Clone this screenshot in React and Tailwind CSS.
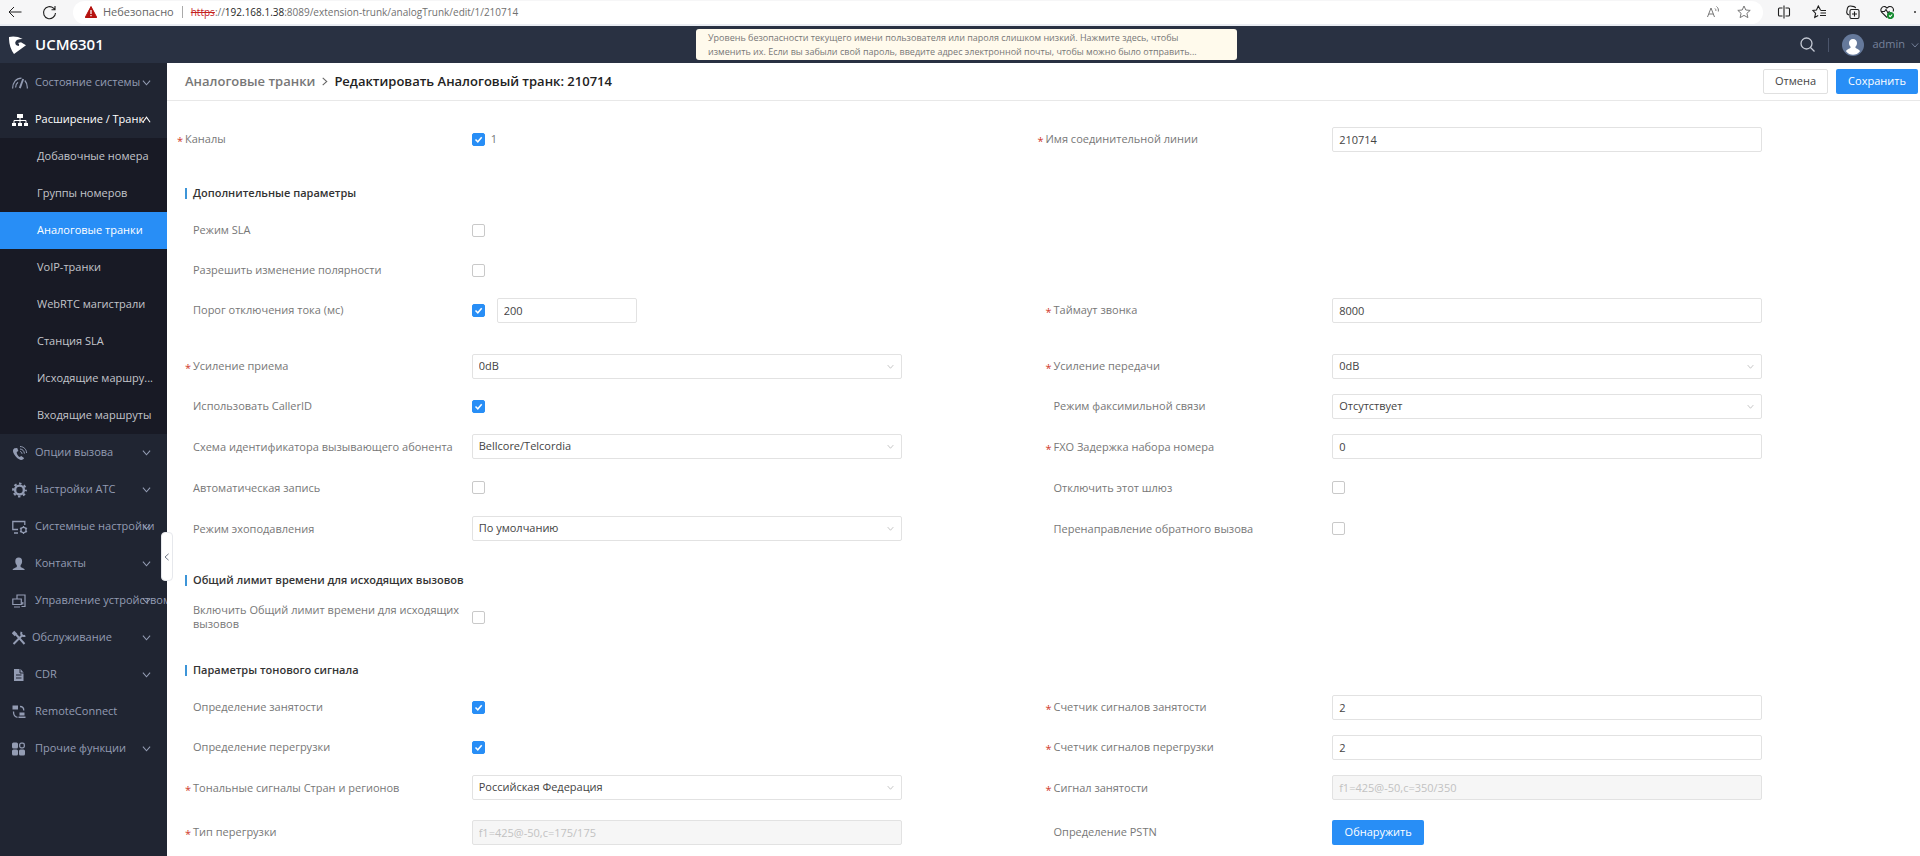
import { useState } from "react";

const ic = "w-4 h-4 shrink-0";

const DashIcon = () => (
  <svg className={ic} viewBox="0 0 16 16" fill="none" stroke="currentColor" strokeWidth="1.200">
    <path d="M.6 13.500C.6 7.500 4 3.200 9.500 3.200M3.600 12.500C3.600 10 4.600 8.200 6 7.200" />
    <path d="M7.800 13.200L11.200 4" strokeWidth="1.900" />
    <path d="M12.800 5.500C14.600 7.500 15.500 10.500 15.300 13.500" />
  </svg>
);
const TreeIcon = () => (
  <svg className={ic} viewBox="0 0 16 16" fill="currentColor">
    <path d="M5 2h6v4H5zM0 11h4v3H0zM6 11h4v3H6zM12 11h4v3h-4z" />
    <path d="M8 6v5M2 11V8.500h12V11" fill="none" stroke="currentColor" />
  </svg>
);
const PhoneIcon = () => (
  <svg className={ic} viewBox="0 0 16 16" fill="currentColor">
    <path d="M2.500 3.200C.5 4.200.5 6.600 2.300 9.600s4.400 5 6.500 5.400c1.600.2 3.300-.8 3.200-1.900l-2.700-2.200-1.700 1.200C6.200 11.500 4.500 8.700 4.700 7l1.700-1L5.200 3z" />
    <path d="M8 6.500c1.200.2 2 1 2 2.300M8 4c2.600.2 4.300 2 4.400 4.600M8 1.500c4 .2 6.500 3 6.600 6.500" fill="none" stroke="currentColor" />
  </svg>
);
const GearIcon = () => (
  <svg className={ic} viewBox="0 0 16 16" fill="none" stroke="currentColor">
    <circle cx="7.500" cy="8" r="4.400" strokeWidth="2.400" />
    <circle cx="7.500" cy="8" r="6.400" strokeWidth="2" strokeDasharray="2.500 2.527" strokeDashoffset="1.250" />
  </svg>
);
const SystemIcon = () => (
  <svg className={ic} viewBox="0 0 16 16" fill="none" stroke="currentColor" strokeWidth="1.300">
    <path d="M6 10.500H.8v-8h12V6M2 14h4" />
    <circle cx="11.500" cy="11" r="2.600" />
    <path d="M11.500 7v1.500M11.500 13.500V15M8 9l1.300.8M13.700 12.200L15 13M8 13l1.300-.8M13.700 9.800L15 9" />
  </svg>
);
const PersonIcon = () => (
  <svg className={ic} viewBox="0 0 16 16" fill="currentColor">
    <path d="M6.700 1.500c2.300 0 3.600 1.600 3.400 3.900-.1 1.700-.7 2.900-1.500 3.700v1.800c.8.900 4.200 1.100 4.200 3.100H.6c0-2 3.400-2.200 4.200-3.100V9.100C4 8.300 3.400 7.100 3.300 5.400 3.100 3.100 4.400 1.500 6.700 1.500z" />
  </svg>
);
const DeviceIcon = () => (
  <svg className={ic} viewBox="0 0 16 16" fill="none" stroke="currentColor" strokeWidth="1.200">
    <path d="M5 6V2h8v11.500H9.500M.8 6h8.500v5.500H.8zM2 14h6M9.300 11h1.500V9" />
  </svg>
);
const ToolsIcon = () => (
  <svg className={ic} viewBox="0 0 16 16" fill="none" stroke="currentColor" strokeWidth="2">
    <path d="M1.500 14l8.500-8.500M4 4.500L12.500 14" />
    <path d="M1 2l3 3" strokeWidth="3.500" />
    <path d="M9.500 1.800C8.300 4.500 10.500 7 13.300 5.600" />
  </svg>
);
const DocIcon = () => (
  <svg className={ic} viewBox="0 0 16 16">
    <path d="M2 2h6.500L11.500 5.500V14H2z" fill="currentColor" />
    <path d="M4 8h5.500M4 11h5.500M8 2v4h4" stroke="#202532" fill="none" />
  </svg>
);
const RemoteIcon = () => (
  <svg className={ic} viewBox="0 0 16 16" fill="currentColor">
    <path d="M.5 1.500H6v4H.5zM7.500 8.500h5v3h-5zM6.500 12.500h7V14h-7z" />
    <path d="M8 2.500c2.500 0 3.800 1.500 3.800 4M1.500 7.500c0 3.500 1.500 5.500 4 5.800" fill="none" stroke="currentColor" strokeWidth="1.300" />
  </svg>
);
const GridIcon = () => (
  <svg className={ic} viewBox="0 0 16 16" fill="currentColor">
    <rect x="0" y="1.500" width="6" height="6" rx="1.500" />
    <rect x="0" y="8.500" width="6" height="6" rx="1.500" />
    <rect x="7" y="8.500" width="6" height="6" rx="1.500" />
    <rect x="7.700" y="2.200" width="4.600" height="4.600" rx="1.500" fill="none" stroke="currentColor" strokeWidth="1.300" />
  </svg>
);

const Chevron = ({ className, up }) => (
  <svg className={className} viewBox="0 0 10 10" fill="none" stroke="currentColor" strokeWidth="1.200">
    <path d={up ? "M1 8l4-5.500L9 8" : "M1 3l4 4.500L9 3"} />
  </svg>
);

const topItems = [
  { label: "Состояние системы", icon: DashIcon },
  { label: "Расширение / Транк", icon: TreeIcon, open: true },
];

const subItems = [
  "Добавочные номера",
  "Группы номеров",
  "Аналоговые транки",
  "VoIP-транки",
  "WebRTC магистрали",
  "Станция SLA",
  "Исходящие маршру...",
  "Входящие маршруты",
];

const bottomItems = [
  { label: "Опции вызова", icon: PhoneIcon },
  { label: "Настройки АТС", icon: GearIcon },
  { label: "Системные настройки", icon: SystemIcon },
  { label: "Контакты", icon: PersonIcon },
  { label: "Управление устройством", icon: DeviceIcon },
  { label: "Обслуживание", icon: ToolsIcon, tight: true },
  { label: "CDR", icon: DocIcon },
  { label: "RemoteConnect", icon: RemoteIcon, leaf: true },
  { label: "Прочие функции", icon: GridIcon },
];

function MenuItem({ item }) {
  const Icon = item.icon;
  return (
    <a
      href="#"
      className={`relative flex items-center h-[37px] pl-3 whitespace-nowrap overflow-hidden ${item.tight ? "gap-1" : "gap-[7px]"} ${
        item.open ? "text-white" : "text-[#939cb3]"
      }`}
    >
      <Icon />
      <span>{item.label}</span>
      {!item.leaf && <Chevron up={item.open} className="absolute right-4 top-[14px] w-[9px] h-[9px]" />}
    </a>
  );
}

function Sidebar() {
  return (
    <aside className="relative w-[167px] shrink-0 bg-[#202532]">
      <nav className="pt-px">
        {topItems.map((item) => (
          <MenuItem key={item.label} item={item} />
        ))}
        <div className="bg-[#181a25]">
          {subItems.map((label) => (
            <a
              key={label}
              href="#"
              className={`flex items-center h-[37px] pl-[37px] whitespace-nowrap ${
                label === "Аналоговые транки" ? "bg-[#288ef6] text-white" : "text-[#c3c5cb]"
              }`}
            >
              {label}
            </a>
          ))}
        </div>
        {bottomItems.map((item) => (
          <MenuItem key={item.label} item={item} />
        ))}
      </nav>
      <button
        aria-label="Свернуть"
        className="absolute -right-[6px] top-[469px] w-3 h-[49px] bg-white border border-[#e6e8ec] rounded flex items-center justify-center text-gray-500"
      >
        <Chevron className="w-2 h-2 shrink-0 rotate-90" />
      </button>
    </aside>
  );
}

function BrowserBar() {
  return (
    <div className="h-[26px] bg-[#f6f6f7] border-b-2 border-[#e9ecf2] flex items-center text-[#1f1f1f]">
      <button aria-label="Назад" className="ml-2">
        <svg className="w-[14px] h-[14px]" viewBox="0 0 14 14" fill="none" stroke="currentColor">
          <path d="M13.500 7H1M6 2L1 7l5 5" />
        </svg>
      </button>
      <button aria-label="Обновить" className="ml-5">
        <svg className="w-[15px] h-[15px]" viewBox="0 0 15 15" fill="none" stroke="currentColor" strokeWidth="1.100">
          <path d="M13.500 8A6 6 0 1 1 11.500 3.200L13 4.500M13 1v3.700H9.500" />
        </svg>
      </button>
      <div className="ml-4 flex-1 h-[23px] bg-white rounded-full flex items-center px-3">
        <svg className="w-3 h-3" viewBox="0 0 12 12">
          <path d="M6 .5L11.800 11.500H.2z" fill="#b5120f" stroke="#b5120f" strokeLinejoin="round" />
          <path d="M6 4v4M6 9v1.300" stroke="#fff" strokeWidth="1.200" />
        </svg>
        <span className="ml-[6px] text-[#666]">Небезопасно</span>
        <span className="w-px h-3 bg-[#aaa] mx-2" />
        <span className="text-[10px] text-[#707070]">
          <span className="text-[#c5221f] line-through">https</span>://
          <span className="text-[#1f1f1f]">192.168.1.38</span>:8089/extension-trunk/analogTrunk/edit/1/210714
        </span>
        <svg className="ml-auto w-3 h-3 text-[#777]" viewBox="0 0 12 12" fill="none" stroke="currentColor">
          <path d="M.5 11L4 2l3.500 9M1.800 8h4.500M8 2.500c.8.600 1 1.500.8 2.500M9.500.5c1.600 1.200 2.200 3 1.800 5" />
        </svg>
        <svg className="ml-[18px] w-[14px] h-[14px] text-[#777]" viewBox="0 0 14 14" fill="none" stroke="currentColor">
          <path d="M7 1l1.800 4 4.400.4-3.300 2.900 1 4.300L7 10.400l-3.900 2.200 1-4.300L.8 5.400 5.200 5z" />
        </svg>
      </div>
      <div className="flex items-center w-[157px] pl-[14px]">
        <svg className="w-[14px] h-[14px] mr-[21px]" viewBox="0 0 14 14" fill="none" stroke="currentColor" strokeWidth="1.100">
          <path d="M5.500 3H2.500a1 1 0 0 0-1 1v6a1 1 0 0 0 1 1h3M8.500 3h3a1 1 0 0 1 1 1v6a1 1 0 0 1-1 1h-3M7 .5v13" />
        </svg>
        <svg className="w-[14px] h-[14px] mr-5" viewBox="0 0 14 14" fill="none" stroke="currentColor" strokeWidth="1.100">
          <path d="M8.500 5L6.300 1 4.500 5 .8 5.400l2.800 2.900-.9 4.200 3.500-2M8.500 5.500H14M8.500 8H14M8 10.500h6" />
        </svg>
        <svg className="w-[14px] h-[14px] mr-5" viewBox="0 0 14 14" fill="none" stroke="currentColor" strokeWidth="1.100">
          <path d="M3 10C1 9.500.5 8 .8 6.500L1.500 3C2 1.500 3 .8 4.500 1L8 1.600c1 .2 1.500.8 1.700 1.600" />
          <rect x="4" y="4.500" width="9" height="9" rx="1.500" />
          <path d="M8.500 6.500v5M6 9h5" />
        </svg>
        <svg className="w-[14px] h-[14px] mr-5" viewBox="0 0 14 14" fill="none" stroke="currentColor" strokeWidth="1.100">
          <path d="M7 12.500L1.800 7.500C-.5 4.500 2 1 5 1.600L7 3l2-1.400c3-.6 5.500 2 4 5M1.500 6.500h3L6 4.500 8 8l1.500-2" />
          <circle cx="10.500" cy="10.500" r="3" fill="#138a2e" stroke="#138a2e" />
          <path d="M9 10.500l1.200 1.200L12.200 9.500" stroke="#fff" />
        </svg>
        <span className="w-[2px] h-[2px] rounded-full bg-[#333]" />
      </div>
    </div>
  );
}

function Header() {
  return (
    <header className="relative h-[37px] bg-[#293142] flex items-center">
      <svg className="ml-[9px] w-[18px] h-[18px]" viewBox="0 0 18 18" fill="#fff">
        <path d="M0 1Q7-.5 13.700 3 7.500 2.700 6.300 6.300 6 9.500 9.500 10 11 8.500 9 7L12 6.300 17 9.200 5 18Q-.3 11 0 1z" />
      </svg>
      <span className="ml-2 text-[15px] font-semibold text-white">UCM6301</span>
      <a
        href="#"
        className="absolute left-[696px] top-[3px] w-[541px] h-[31px] bg-[#fffaec] rounded-[3px] px-3 py-[2px] text-[9px] leading-[14px] text-[#777] whitespace-nowrap"
      >
        Уровень безопасности текущего имени пользователя или пароля слишком низкий. Нажмите здесь, чтобы
        <br />
        изменить их. Если вы забыли свой пароль, введите адрес электронной почты, чтобы можно было отправить...
      </a>
      <div className="ml-auto flex items-center text-[#76829b]">
        <button aria-label="Поиск">
          <svg className="w-[15px] h-[15px]" viewBox="0 0 15 15" fill="none" stroke="#c4c9d4" strokeWidth="1.300">
            <circle cx="6.500" cy="6.500" r="5.500" />
            <path d="M10.500 10.500l4 4" />
          </svg>
        </button>
        <span className="w-px h-[14px] bg-[#4b556b] mx-[13px]" />
        <svg className="w-[22px] h-[22px]" viewBox="0 0 22 22">
          <circle cx="11" cy="11" r="11" fill="#65799b" />
          <path d="M11 5c2.500 0 4 1.700 4 4 0 1.800-.7 3.200-1.800 4 .2 1.700 3.500 1.600 4.800 4.200-3.500 4.800-10.500 4.800-14 0C5.300 14.600 8.600 14.700 8.800 13 7.700 12.200 7 10.800 7 9c0-2.300 1.500-4 4-4z" fill="#fff" />
        </svg>
        <span className="ml-2">admin</span>
        <Chevron className="w-2 h-2 ml-[6px] mr-px" />
      </div>
    </header>
  );
}

function Checkbox({ id, checked }) {
  const [on, setOn] = useState(!!checked);
  return (
    <span className="relative block w-[13px] h-[13px] shrink-0">
      <input
        id={id}
        type="checkbox"
        checked={on}
        onChange={() => setOn(!on)}
        className="block appearance-none w-[13px] h-[13px] rounded-[2px] border border-[#c9c9c9] bg-white checked:bg-[#288ef6] checked:border-[#288ef6]"
      />
      {on && (
        <svg className="absolute inset-0 w-[13px] h-[13px] pointer-events-none" viewBox="0 0 13 13" fill="none" stroke="#fff" strokeWidth="1.500">
          <path d="M3.500 6.500l2.300 2.300L9.700 4.200" />
        </svg>
      )}
    </span>
  );
}

const box = "block w-full h-[25px] px-[6px] border border-[#e2e2e2] rounded-[2px]";

function Input({ id, value, disabled }) {
  return (
    <input
      id={id}
      type="text"
      defaultValue={value}
      disabled={disabled}
      className={`${box} ${disabled ? "bg-[#f6f6f6] text-[#c2c2c2]" : "bg-white text-[#444]"}`}
    />
  );
}

function Select({ id, value }) {
  return (
    <div className="relative">
      <select id={id} defaultValue={value} className={`${box} appearance-none bg-white text-[#444]`}>
        <option>{value}</option>
      </select>
      <Chevron className="absolute right-2 top-[9px] w-[7px] h-[7px] text-[#bbb] pointer-events-none" />
    </div>
  );
}

// outdent pulls the label one asterisk further left, used by the row above the first section
function Field({ id, label, required, outdent, children }) {
  return (
    <div className="grid grid-cols-[13fr_20fr_7fr] items-center">
      <label htmlFor={id} className={`flex items-center leading-[14px] text-[#777] ${outdent ? "-ml-[15px]" : "-ml-[7px]"}`}>
        <span className="w-2 shrink-0 pt-1 text-[#d0392b]">{required && "*"}</span>
        <span>{label}</span>
      </label>
      <div>{children}</div>
    </div>
  );
}

function Row({ className = "h-10", children }) {
  return <div className={`grid grid-cols-2 ${className}`}>{children}</div>;
}

function SectionTitle({ children }) {
  return (
    <h2 className="-ml-[7px] h-[14px] flex items-center font-semibold text-[#333]">
      <span className="w-[2px] h-[11px] bg-[#3d95d8] mr-[6px]" />
      {children}
    </h2>
  );
}

export default function App() {
  return (
    <div className="min-h-screen flex flex-col bg-white font-['Open_Sans','Noto_Sans',sans-serif] text-[11px]">
      <BrowserBar />
      <Header />
      <div className="flex flex-1">
        <Sidebar />
        <main className="flex-1 min-w-0">
          <div className="h-[38px] border-b border-[#e8e8e8] flex items-center pl-[18px] pr-[2px]">
            <h1 className="flex items-center text-[13px] font-semibold text-[#222]">
              <a href="#" className="text-[#777]">Аналоговые транки</a>
              <Chevron className="w-[9px] h-[9px] -rotate-90 mx-[5px] text-[#666]" />
              <span>Редактировать Аналоговый транк: 210714</span>
            </h1>
            <button className="ml-auto w-[65px] h-[25px] border border-[#e0e0e0] rounded-[2px] text-[#444]">Отмена</button>
            <button className="ml-2 w-[82px] h-[25px] bg-[#288ef6] rounded-[2px] text-white">Сохранить</button>
          </div>

          <form className="pl-[25px] pr-[7px] pt-[18px]">
            <Row>
              <Field id="channel" label="Каналы" required outdent>
                <div className="flex items-center gap-[6px] text-[#777]">
                  <Checkbox id="channel" checked />
                  <label htmlFor="channel">1</label>
                </div>
              </Field>
              <Field id="name" label="Имя соединительной линии" required outdent>
                <Input id="name" value="210714" />
              </Field>
            </Row>

            <div className="mt-[27px] mb-[10px]">
              <SectionTitle>Дополнительные параметры</SectionTitle>
            </div>
            <Row>
              <Field id="sla" label="Режим SLA">
                <Checkbox id="sla" />
              </Field>
            </Row>
            <Row>
              <Field id="polarity" label="Разрешить изменение полярности">
                <Checkbox id="polarity" />
              </Field>
            </Row>
            <Row>
              <Field id="threshold" label="Порог отключения тока (мс)">
                <div className="flex items-center gap-3">
                  <Checkbox id="threshold" checked />
                  <div className="w-[140px]">
                    <input aria-label="Порог" type="text" defaultValue="200" className={`${box} bg-white text-[#444]`} />
                  </div>
                </div>
              </Field>
              <Field id="ring" label="Таймаут звонка" required>
                <Input id="ring" value="8000" />
              </Field>
            </Row>

            <Row className="h-10 mt-4">
              <Field id="rx" label="Усиление приема" required>
                <Select id="rx" value="0dB" />
              </Field>
              <Field id="tx" label="Усиление передачи" required>
                <Select id="tx" value="0dB" />
              </Field>
            </Row>
            <Row>
              <Field id="callerid" label="Использовать CallerID">
                <Checkbox id="callerid" checked />
              </Field>
              <Field id="fax" label="Режим факсимильной связи">
                <Select id="fax" value="Отсутствует" />
              </Field>
            </Row>
            <Row className="h-[41px]">
              <Field id="scheme" label="Схема идентификатора вызывающего абонента">
                <Select id="scheme" value="Bellcore/Telcordia" />
              </Field>
              <Field id="fxo" label="FXO Задержка набора номера" required>
                <Input id="fxo" value="0" />
              </Field>
            </Row>
            <Row className="h-[41px]">
              <Field id="record" label="Автоматическая запись">
                <Checkbox id="record" />
              </Field>
              <Field id="disable" label="Отключить этот шлюз">
                <Checkbox id="disable" />
              </Field>
            </Row>
            <Row className="h-[41px]">
              <Field id="echo" label="Режим эхоподавления">
                <Select id="echo" value="По умолчанию" />
              </Field>
              <Field id="callback" label="Перенаправление обратного вызова">
                <Checkbox id="callback" />
              </Field>
            </Row>

            <div className="mt-6 mb-[10px]">
              <SectionTitle>Общий лимит времени для исходящих вызовов</SectionTitle>
            </div>
            <Row>
              <Field id="limit" label="Включить Общий лимит времени для исходящих вызовов">
                <Checkbox id="limit" />
              </Field>
            </Row>

            <div className="mt-[26px] mb-[10px]">
              <SectionTitle>Параметры тонового сигнала</SectionTitle>
            </div>
            <Row>
              <Field id="busy" label="Определение занятости">
                <Checkbox id="busy" checked />
              </Field>
              <Field id="busycount" label="Счетчик сигналов занятости" required>
                <Input id="busycount" value="2" />
              </Field>
            </Row>
            <Row>
              <Field id="cong" label="Определение перегрузки">
                <Checkbox id="cong" checked />
              </Field>
              <Field id="congcount" label="Счетчик сигналов перегрузки" required>
                <Input id="congcount" value="2" />
              </Field>
            </Row>
            <Row className="h-[41px]">
              <Field id="tone" label="Тональные сигналы Стран и регионов" required>
                <Select id="tone" value="Российская Федерация" />
              </Field>
              <Field id="busytone" label="Сигнал занятости" required>
                <Input id="busytone" value="f1=425@-50,c=350/350" disabled />
              </Field>
            </Row>
            <Row className="h-10 mt-1">
              <Field id="congtype" label="Тип перегрузки" required>
                <Input id="congtype" value="f1=425@-50,c=175/175" disabled />
              </Field>
              <Field id="pstn" label="Определение PSTN">
                <button id="pstn" type="button" className="block w-[92px] h-[25px] bg-[#288ef6] rounded-[2px] text-white">
                  Обнаружить
                </button>
              </Field>
            </Row>
          </form>
        </main>
      </div>
    </div>
  );
}
